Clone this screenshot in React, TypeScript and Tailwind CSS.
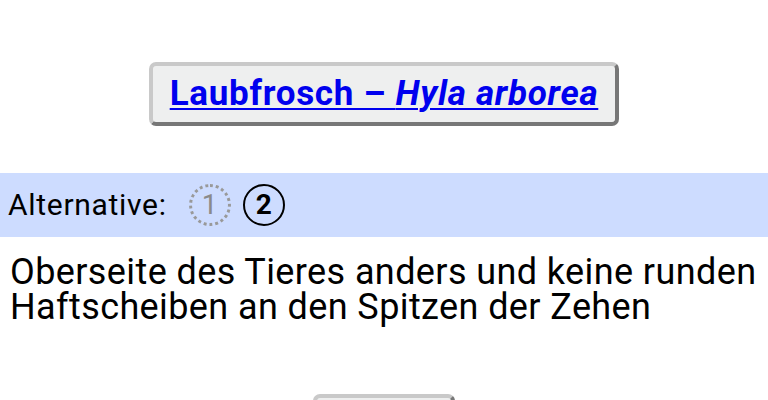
export default function App() {
  return (
    <div className="h-[400px] w-[768px] overflow-hidden bg-white font-['Roboto',sans-serif] text-black">
      <div className="flex justify-center pt-[62px]">
        <button
          type="button"
          className="rounded-[7px] border-4 border-t-[#c9c9c9] border-l-[#c9c9c9] border-r-[#777777] border-b-[#777777] bg-[#eeefef] px-[17px] py-[5px]"
        >
          <a
            href="#"
            className="text-[35px] font-bold leading-[46px] tracking-[0.7px] text-[#0000ee] underline decoration-2 underline-offset-[3px]"
          >
            Laubfrosch – <i>Hyla arborea</i>
          </a>
        </button>
      </div>

      <div className="mt-[47px] flex h-[64px] items-center bg-[#cddcff] pl-[8px]">
        <span className="text-[30px] leading-none tracking-[0.7px]">Alternative:</span>
        <span className="ml-[22px] flex h-[42px] w-[42px] items-center justify-center rounded-full border-[3px] border-dotted border-[#999999] text-[28px] text-[#8a8a8a]">
          1
        </span>
        <span className="ml-[12px] flex h-[42px] w-[42px] items-center justify-center rounded-full border-[2.5px] border-black text-[28px] font-bold">
          2
        </span>
      </div>

      <p className="mt-[18px] px-[10px] text-[36px] leading-[35px] tracking-[0.4px]">
        Oberseite des Tieres anders und keine runden Haftscheiben an den Spitzen der Zehen
      </p>

      <div className="mt-[69px] flex justify-center">
        <div className="h-[40px] w-[142px] rounded-[7px] border-4 border-t-[#c9c9c9] border-l-[#c9c9c9] border-r-[#777777] border-b-[#777777] bg-[#eeefef]" />
      </div>
    </div>
  );
}
